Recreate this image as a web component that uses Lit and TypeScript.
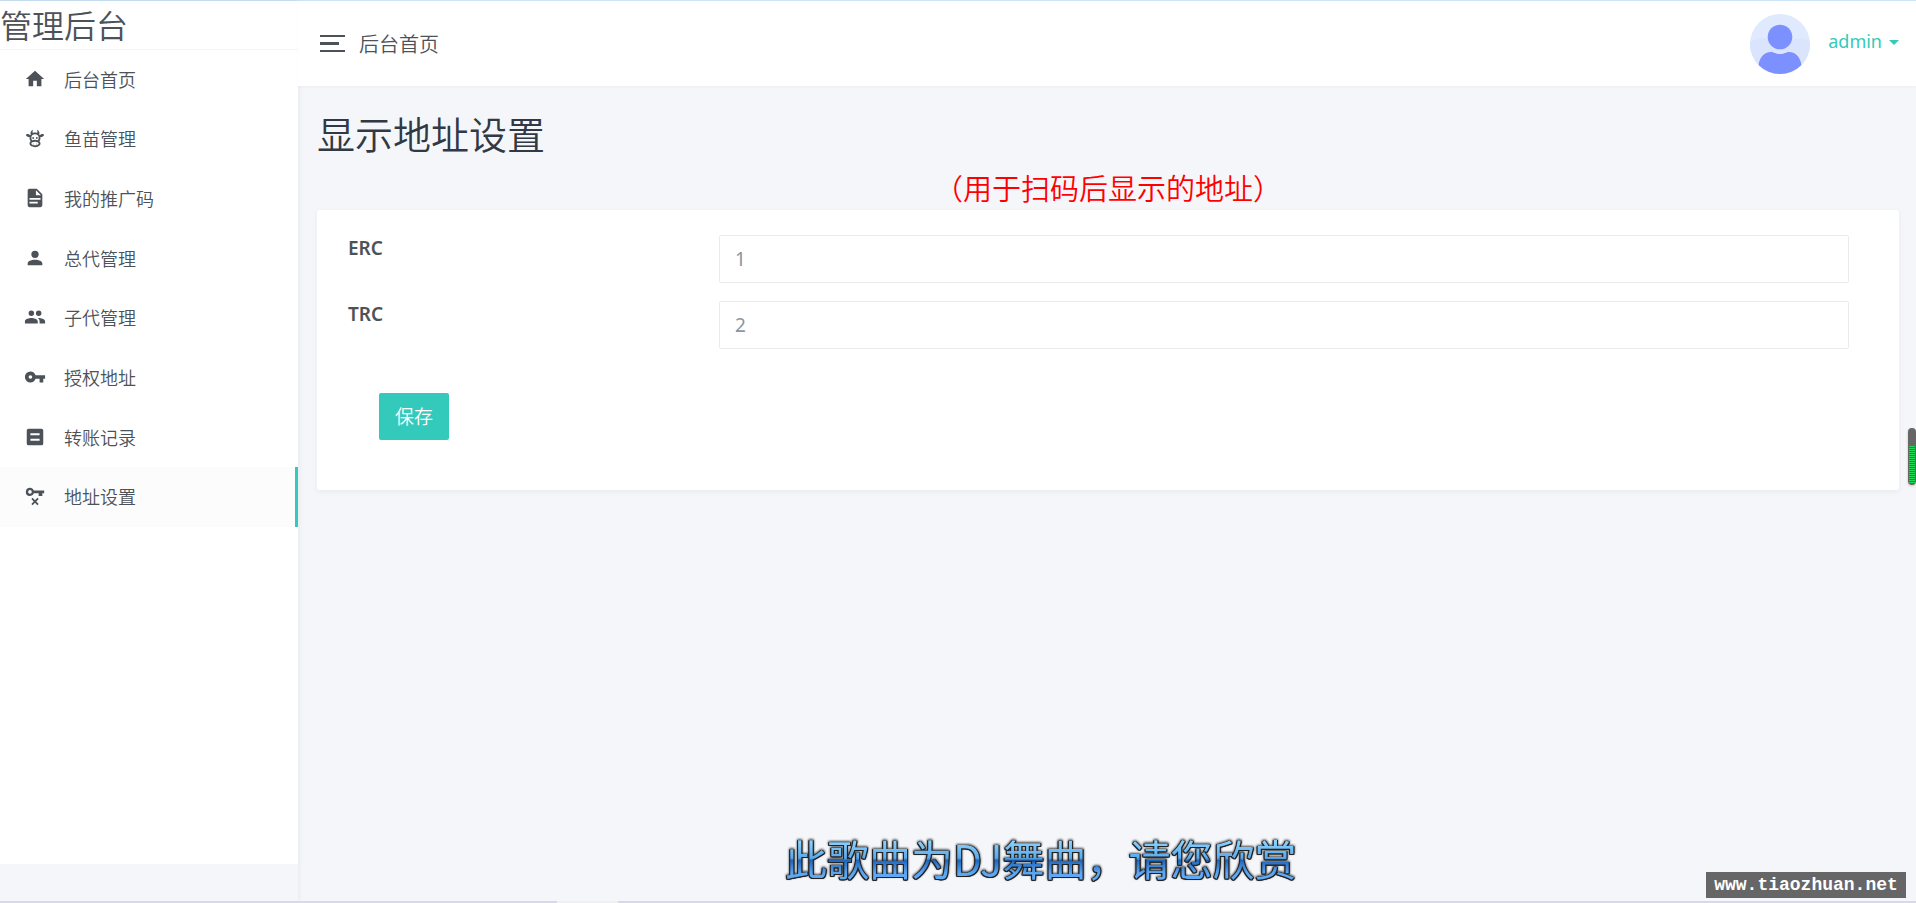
import { LitElement, html, css, svg } from "lit";
import { customElement, state } from "lit/decorators.js";

const ICONS: Record<string, string> = {
  home: "M10,20V14H14V20H19V12H22L12,3L2,12H5V20H10Z",
  cow: "M10.5,18A0.5,0.5 0 0,1 11,18.5A0.5,0.5 0 0,1 10.5,19A0.5,0.5 0 0,1 10,18.5A0.5,0.5 0 0,1 10.5,18M13.5,18A0.5,0.5 0 0,1 14,18.5A0.5,0.5 0 0,1 13.5,19A0.5,0.5 0 0,1 13,18.5A0.5,0.5 0 0,1 13.5,18M10,11A1,1 0 0,1 11,12A1,1 0 0,1 10,13A1,1 0 0,1 9,12A1,1 0 0,1 10,11M14,11A1,1 0 0,1 15,12A1,1 0 0,1 14,13A1,1 0 0,1 13,12A1,1 0 0,1 14,11M18,18C18,20.21 15.31,22 12,22C8.69,22 6,20.21 6,18C6,17.1 6.45,16.27 7.2,15.6C6.45,14.6 6,13.35 6,12L6.12,10.78C5.58,10.93 4.93,10.93 4.4,10.78C3.38,10.5 1.84,9.35 2.07,8.55C2.3,7.75 4.21,7.6 5.23,7.9C5.82,8.07 6.45,8.5 6.82,8.96L7.39,8.15C6.79,7.05 7,4 10,3L9.91,3.14V3.14C9.63,3.58 8.91,4.97 9.67,6.47C10.39,6.17 11.17,6 12,6C12.83,6 13.61,6.17 14.33,6.47C15.09,4.97 14.37,3.58 14.09,3.14L14,3C17,4 17.21,7.05 16.61,8.15L17.18,8.96C17.55,8.5 18.18,8.07 18.77,7.9C19.79,7.6 21.7,7.75 21.93,8.55C22.16,9.35 20.62,10.5 19.6,10.78C19.07,10.93 18.42,10.93 17.88,10.78L18,12C18,13.35 17.55,14.6 16.8,15.6C17.55,16.27 18,17.1 18,18M12,16C9.79,16 8,16.9 8,18C8,19.1 9.79,20 12,20C14.21,20 16,19.1 16,18C16,16.9 14.21,16 12,16M12,14C13.12,14 14.17,14.21 15.07,14.56C15.65,13.87 16,13 16,12A4,4 0 0,0 12,8A4,4 0 0,0 8,12C8,13 8.35,13.87 8.93,14.56C9.83,14.21 10.88,14 12,14Z",
  file: "M13,9H18.5L13,3.5V9M6,2H14L20,8V20A2,2 0 0,1 18,22H6C4.89,22 4,21.1 4,20V4C4,2.89 4.89,2 6,2M15,18V16H6V18H15M18,14V12H6V14H18Z",
  account: "M12,4A4,4 0 0,1 16,8A4,4 0 0,1 12,12A4,4 0 0,1 8,8A4,4 0 0,1 12,4M12,14C16.42,14 20,15.79 20,18V20H4V18C4,15.79 7.58,14 12,14Z",
  accounts: "M16,13C15.71,13 15.38,13 15.03,13.05C16.19,13.89 17,15 17,16.5V19H23V16.5C23,14.17 18.33,13 16,13M8,13C5.67,13 1,14.17 1,16.5V19H15V16.5C15,14.17 10.33,13 8,13M8,11A3,3 0 0,0 11,8A3,3 0 0,0 8,5A3,3 0 0,0 5,8A3,3 0 0,0 8,11M16,11A3,3 0 0,0 19,8A3,3 0 0,0 16,5A3,3 0 0,0 13,8A3,3 0 0,0 16,11Z",
  key: "M7,14A2,2 0 0,1 5,12A2,2 0 0,1 7,10A2,2 0 0,1 9,12A2,2 0 0,1 7,14M12.65,10C11.83,7.67 9.61,6 7,6A6,6 0 0,0 1,12A6,6 0 0,0 7,18C9.61,18 11.83,16.33 12.65,14H17V18H21V14H23V10H12.65Z",
  records: "M5,3H19A2,2 0 0,1 21,5V19A2,2 0 0,1 19,21H5A2,2 0 0,1 3,19V5A2,2 0 0,1 5,3M7,8V10H17V8H7M7,14V16H17V14H7Z",
  keyRemove: "M6.5,3C8.46,3 10.13,4.25 10.74,6H22V9H20V12H16V9H10.74A4.5,4.5 0 1,1 6.5,3M6.5,5.5A2,2 0 0,0 6.5,9.5A2,2 0 0,0 6.5,5.5M9.4,14L12,16.6L14.6,14L16,15.4L13.4,18L16,20.6L14.6,22L12,19.4L9.4,22L8,20.6L10.6,18L8,15.4Z",
};

const MENU = [
  { icon: "home", label: "后台首页" },
  { icon: "cow", label: "鱼苗管理" },
  { icon: "file", label: "我的推广码" },
  { icon: "account", label: "总代管理" },
  { icon: "accounts", label: "子代管理" },
  { icon: "key", label: "授权地址" },
  { icon: "records", label: "转账记录" },
  { icon: "keyRemove", label: "地址设置" },
];

@customElement("app-root")
export class AppRoot extends LitElement {
  @state() private current = 7;

  static styles = css`
    :host {
      display: block;
      font-family: "Noto Sans", "Noto Sans CJK SC", sans-serif;
      font-size: 18px;
      color: #4d5259;
    }
    * { box-sizing: border-box; }
    .page {
      display: grid;
      grid-template-columns: 298px minmax(0, 1fr);
      grid-template-rows: 1fr 2px;
      min-height: 100vh;
      background: #f5f6fa;
      border-top: 1px solid #cce4f7;
    }
    .sidebar {
      display: flex;
      flex-direction: column;
      padding-bottom: 37px;
      box-shadow: 0 0 6px rgba(0, 0, 0, 0.08);
    }
    .panel { flex: 1; background: #fff; }
    .brand {
      height: 49px;
      border-bottom: 1px solid #f5f6fa;
      font-size: 32px;
      line-height: 46px;
      font-family: "Noto Sans CJK SC", sans-serif;
      font-weight: 350;
      white-space: nowrap;
    }
    .menu {
      display: grid;
      grid-template-rows: repeat(8, 1fr);
      height: 477px;
      margin: 0;
      padding: 0;
      list-style: none;
    }
    .link {
      display: flex;
      align-items: center;
      gap: 18px;
      height: 100%;
      padding: 0 0 2px 24px;
      border-right: 3px solid transparent;
      color: #4d5259;
      font-weight: 350;
      text-decoration: none;
    }
    .link.active { background: #fcfcfc; border-right-color: #33cabb; }
    .icon { width: 22px; height: 22px; fill: currentColor; }
    .topbar {
      display: flex;
      align-items: center;
      height: 85px;
      padding: 0 17px 0 22px;
      background: #fff;
      box-shadow: 0 1px 2px rgba(0, 0, 0, 0.04);
    }
    .toggle {
      display: flex;
      flex-direction: column;
      gap: 5px;
      width: 25px;
      padding: 0;
      border: 0;
      background: none;
    }
    .bar { width: 25px; height: 2px; background: #4d5259; }
    .bar.mid { width: 19px; height: 3px; }
    .crumb { flex: 1; margin-left: 14px; font-size: 20px; font-weight: 350; }
    .avatar { width: 60px; height: 60px; margin-right: 18px; }
    .user {
      display: flex;
      align-items: center;
      gap: 7px;
      margin-bottom: 6px;
      padding: 0;
      border: 0;
      background: none;
      font: inherit;
      color: #33cabb;
    }
    .caret {
      border: 5px solid transparent;
      border-top-color: #33cabb;
      border-bottom: 0;
      margin-top: 4px;
    }
    .content { padding: 20px 17px 20px 19px; }
    .title {
      margin: 0;
      font-size: 38px;
      line-height: 56px;
      font-weight: 350;
      color: #313944;
    }
    .hint {
      margin: 6px 0 0;
      font-size: 29px;
      line-height: 42px;
      font-weight: 350;
      text-align: center;
      color: #f00;
    }
    .card {
      padding: 25px 50px 50px 31px;
      border-radius: 3px;
      background: #fff;
      box-shadow: 0 2px 6px rgba(0, 0, 0, 0.05);
    }
    .field {
      display: grid;
      grid-template-columns: 371fr 1130fr;
      margin-bottom: 18px;
    }
    .label { font-size: 19px; font-weight: 600; line-height: 26px; }
    .input {
      width: 100%;
      height: 48px;
      padding: 0 15px;
      border: 1px solid #ebebeb;
      border-radius: 2px;
      outline: 0;
      background: #fff;
      font: inherit;
      font-size: 19px;
      color: #8b95a5;
    }
    .save {
      display: block;
      width: 70px;
      height: 47px;
      margin: 44px 0 0 31px;
      padding: 0 0 2px;
      border: 0;
      border-radius: 2px;
      background: #33cabb;
      color: #fff;
      font: inherit;
      font-size: 19px;
      font-weight: 350;
    }
    .strip { grid-column: 1 / -1; display: flex; background: #d9d8e8; }
    .strip-gap { width: 61px; margin-left: 557px; background: #f0f0f4; }
    .lyric {
      position: fixed;
      left: 785px;
      bottom: 14px;
      margin: 0;
      font-family: "Noto Sans CJK SC", sans-serif;
      font-size: 42px;
      line-height: 62px;
      white-space: nowrap;
      color: transparent;
      background: linear-gradient(#8fd6ff 20%, #5aa9ec 50%, #1f66bd 54%, #5ba6f2 74%, #62acf5 85%);
      -webkit-background-clip: text;
      background-clip: text;
      filter: drop-shadow(1px 0 0 #222) drop-shadow(-1px 0 0 #222) drop-shadow(0 1px 0 #222) drop-shadow(0 -1px 1px #444);
    }
    .mark {
      position: fixed;
      right: 10px;
      bottom: 5px;
      width: 200px;
      font-family: "Liberation Mono", monospace;
      font-weight: 700;
      font-size: 18px;
      line-height: 26px;
      text-align: center;
      color: #fff;
      background: #666;
    }
    .gauge {
      position: fixed;
      right: 0;
      top: 428px;
      width: 8px;
      height: 57px;
      padding: 18px 1px 2px;
      border-radius: 4px;
      background: #666;
      box-shadow: 0 1px 3px rgba(0, 0, 0, 0.2);
    }
    .level {
      height: 100%;
      background: repeating-linear-gradient(#1fd655 0 1px, #4f6b55 1px 2px);
    }
  `;

  private pick(e: Event, i: number) {
    e.preventDefault();
    this.current = i;
  }

  render() {
    return html`
      <div class="page">
        <aside class="sidebar">
          <div class="panel">
            <div class="brand">管理后台</div>
            <nav>
              <ul class="menu">
                ${MENU.map(
                  (m, i) => html`<li>
                    <a class="link ${i === this.current ? "active" : ""}" href="#" @click=${(e: Event) => this.pick(e, i)}>
                      <svg class="icon" viewBox="0 0 24 24" aria-hidden="true">${svg`<path fill-rule="evenodd" d=${ICONS[m.icon]}></path>`}</svg>
                      <span>${m.label}</span>
                    </a>
                  </li>`
                )}
              </ul>
            </nav>
          </div>
        </aside>
        <div>
          <header class="topbar">
            <button class="toggle" type="button" aria-label="菜单">
              <span class="bar"></span><span class="bar mid"></span><span class="bar"></span>
            </button>
            <span class="crumb">后台首页</span>
            <svg class="avatar" viewBox="0 0 60 60" aria-hidden="true">
              <clipPath id="disc"><circle cx="30" cy="30" r="30"></circle></clipPath>
              <g clip-path="url(#disc)">
                <rect width="60" height="60" fill="#e0eaff"></rect>
                <path d="M0 28Q10 22 22 25L40 27Q50 22 60 27V60H0Z" fill="#dae5fd"></path>
                <circle cx="30" cy="23" r="12.3" fill="#7c90ff"></circle>
                <path d="M8.500 52C9 44 14 38 21 38C24 38 25 40 30 40S36 38 39 38C46 38 51 44 51.500 52V60H8.500Z" fill="#7c90ff"></path>
              </g>
            </svg>
            <button class="user" type="button">admin<span class="caret"></span></button>
          </header>
          <main class="content">
            <h1 class="title">显示地址设置</h1>
            <p class="hint">（用于扫码后显示的地址）</p>
            <form class="card" @submit=${(e: Event) => e.preventDefault()}>
              <div class="field">
                <label class="label" for="erc">ERC</label>
                <input class="input" id="erc" type="text" value="1" />
              </div>
              <div class="field">
                <label class="label" for="trc">TRC</label>
                <input class="input" id="trc" type="text" value="2" />
              </div>
              <button class="save" type="submit">保存</button>
            </form>
          </main>
        </div>
        <div class="strip"><span class="strip-gap"></span></div>
      </div>
      <p class="lyric">此歌曲为DJ舞曲，请您欣赏</p>
      <div class="mark">www.tiaozhuan.net</div>
      <div class="gauge"><div class="level"></div></div>
    `;
  }
}
